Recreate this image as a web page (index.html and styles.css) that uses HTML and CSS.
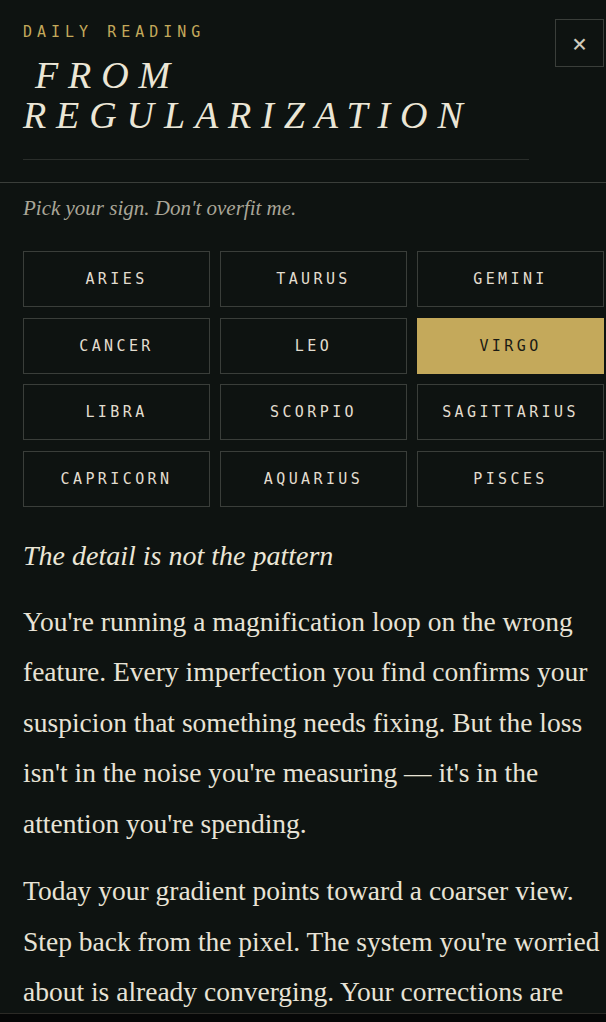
FILE: index.html
```html
<!DOCTYPE html>
<html lang="en">
<head>
    <meta charset="UTF-8">
    <meta name="viewport" content="width=device-width, initial-scale=1.0">
    <title>Daily Reading</title>
    <link rel="stylesheet" href="styles.css">
</head>
<body>
    <div class="panel">
        <header class="panel-head">
            <div class="head-text">
                <div class="eyebrow">Daily Reading</div>
                <h1 class="title">From Regularization</h1>
            </div>
            <button class="close-btn" aria-label="Close">&times;</button>
        </header>

        <main class="panel-body">
            <p class="prompt">Pick your sign. Don't overfit me.</p>

            <div class="sign-grid">
                <button class="sign">Aries</button>
                <button class="sign">Taurus</button>
                <button class="sign">Gemini</button>
                <button class="sign">Cancer</button>
                <button class="sign">Leo</button>
                <button class="sign active">Virgo</button>
                <button class="sign">Libra</button>
                <button class="sign">Scorpio</button>
                <button class="sign">Sagittarius</button>
                <button class="sign">Capricorn</button>
                <button class="sign">Aquarius</button>
                <button class="sign">Pisces</button>
            </div>

            <article class="reading">
                <h2>The detail is not the pattern</h2>
                <p>You're running a magnification loop on the wrong feature. Every imperfection you find confirms your suspicion that something needs fixing. But the loss isn't in the noise you're measuring — it's in the attention you're spending.</p>
                <p>Today your gradient points toward a coarser view. Step back from the pixel. The system you're worried about is already converging. Your corrections are adding variance, not removing it. Let the weights settle.</p>
            </article>
        </main>

        <footer class="panel-foot"></footer>
    </div>
</body>
</html>
```

FILE: styles.css
```css
:root {
    --bg: #0e1311;
    --ink: #ebe6d6;
    --muted: #a9a698;
    --gold: #c4a95b;
    --line: #3a3e3a;
    --line-soft: #2a2e2b;
    --serif: 'Liberation Serif', 'Times New Roman', serif;
    --mono: 'DejaVu Sans Mono', 'Liberation Mono', monospace;
}

* {
    box-sizing: border-box;
    margin: 0;
    padding: 0;
}

html, body {
    height: 100%;
}

body {
    background: var(--bg);
    color: var(--ink);
    font-family: var(--serif);
    overflow: hidden;
}

.panel {
    display: flex;
    flex-direction: column;
    height: 100vh;
}

/* header */
.panel-head {
    display: flex;
    align-items: flex-start;
    gap: 26px;
    padding: 19px 2px 22px 23px;
    border-bottom: 1px solid var(--line);
    flex-shrink: 0;
}

.head-text {
    flex: 1;
    padding-top: 4px;
    padding-bottom: 24px;
    border-bottom: 1px solid var(--line-soft);
}

.eyebrow {
    font-family: var(--mono);
    font-size: 15px;
    line-height: 18px;
    letter-spacing: 5px;
    text-transform: uppercase;
    color: var(--gold);
}

.title {
    margin-top: 14px;
    font-size: 38px;
    line-height: 40px;
    font-weight: 400;
    font-style: italic;
    letter-spacing: 9.9px;
    text-transform: uppercase;
    text-indent: 12px;
    color: var(--ink);
}

.close-btn {
    width: 49px;
    height: 48px;
    flex-shrink: 0;
    background: transparent;
    border: 1px solid var(--line);
    color: #cfcabc;
    font-family: var(--mono);
    font-size: 25px;
    line-height: 1;
    cursor: pointer;
}

/* scrolling body */
.panel-body {
    flex: 1;
    overflow-y: auto;
    scrollbar-width: none;
    padding: 0 0 40px 23px;
}

.prompt {
    margin-top: 11px;
    font-size: 21px;
    line-height: 28px;
    font-style: italic;
    color: var(--muted);
}

.sign-grid {
    display: grid;
    grid-template-columns: repeat(3, 187px);
    gap: 10.5px 10px;
    margin-top: 29px;
}

.sign {
    height: 56px;
    background: transparent;
    border: 1px solid var(--line);
    color: #e2ddcf;
    font-family: var(--mono);
    font-size: 15px;
    letter-spacing: 3.4px;
    text-transform: uppercase;
    cursor: pointer;
}

.sign.active {
    background: var(--gold);
    border-color: var(--gold);
    color: #1a1a14;
}

.reading h2 {
    margin-top: 29px;
    font-size: 28px;
    line-height: 40px;
    font-weight: 400;
    font-style: italic;
    color: var(--ink);
}

.reading p {
    margin-top: 21px;
    font-size: 27.5px;
    line-height: 50.5px;
    color: #e8e3d6;
}

.reading p + p {
    margin-top: 17px;
}

.panel-foot {
    height: 9px;
    flex-shrink: 0;
    background: #060707;
    border-top: 1px solid #2b2a26;
}
```
